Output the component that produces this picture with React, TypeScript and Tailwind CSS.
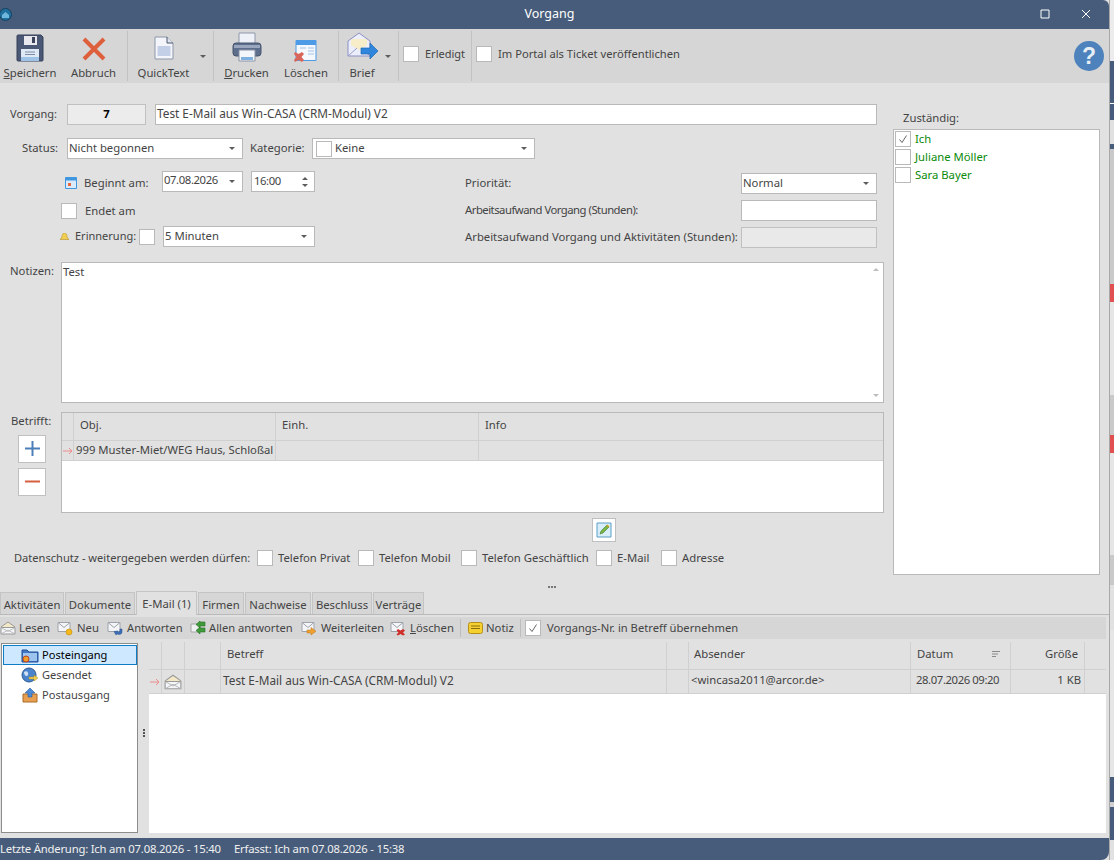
import React from "react";

const Caret = ({ className = "" }: { className?: string }) => (
  <svg width="6" height="3" viewBox="0 0 6 3" className={className}>
    <path d="M0 0h6L3 3z" fill="#5c5c5c" />
  </svg>
);

const Check = ({ checked = false, className = "" }: { checked?: boolean; className?: string }) => (
  <span className={`flex h-[16px] w-[16px] shrink-0 items-center justify-center border border-[#b9b9b9] bg-white ${className}`}>
    {checked && (
      <svg width="10" height="10" viewBox="0 0 10 10">
        <path d="M1.5 5.5 4 8.5 8.5 1.5" fill="none" stroke="#666" strokeWidth="1" />
      </svg>
    )}
  </span>
);

const Select = ({ value, className = "", box = false }: { value: string; className?: string; box?: boolean }) => (
  <div className={`flex h-[21px] items-center border border-[#b9b9b9] bg-white pl-[1px] pr-[7px] ${className}`}>
    {box && <Check className="ml-[2px] mr-[3px]" />}
    <span className="flex-1 truncate">{value}</span>
    <Caret />
  </div>
);

const Envelope = ({ open = false, size = 16 }: { open?: boolean; size?: number }) => (
  <svg width={size} height={size} viewBox="0 0 16 16" className="shrink-0">
    {open && <path d="M1 7 8 2l7 5" fill="#f3e9c6" stroke="#9a9a9a" strokeWidth="1" />}
    <path d="M1 7.5h14V14H1z" fill="#f4f6fa" stroke="#9a9a9a" strokeWidth="1" />
    <path d="M1 14l7-4 7 4M1 7.5l7 4 7-4" fill="none" stroke="#b0b0b0" strokeWidth="0.8" />
  </svg>
);

const MailIcon = ({ kind }: { kind: "neu" | "antw" | "allen" | "weiter" | "del" }) => (
  <svg width="17" height="16" viewBox="0 0 17 16" className="shrink-0">
    {kind === "allen" ? (
      <>
        <path d="M2 4h9v8H2z" fill="#eef0f2" stroke="#a5a5a5" />
        <path d="M16 2v4H11V8L7 4.5 11 1v1zM16 8v4H11v2L7 10.5 11 7v1z" fill="#3f9a3a" stroke="#2a6e28" strokeWidth="0.6" />
      </>
    ) : (
      <>
        <path d="M1 2.5h12v9H1z" fill="#f3f5f8" stroke="#9fa4aa" />
        <path d="M1 2.5l6 5 6-5" fill="none" stroke="#9fa4aa" />
        {kind === "neu" && <circle cx="12" cy="12" r="3" fill="#f2b81e" stroke="#c78c0c" strokeWidth="0.6" />}
        {kind === "antw" && <path d="M15 9v3c0 2-2 3-5 2l-1 1-2-3.5 4-.5-1 1c2 .6 3 0 3-3z" fill="#3c6db8" stroke="#28508c" strokeWidth="0.5" />}
        {kind === "weiter" && <path d="M6 10h4V7.5l5 3.8-5 3.7V13H6z" fill="#f0a030" stroke="#b87416" strokeWidth="0.5" />}
        {kind === "del" && <path d="M8 9l2.5 1.5L13 9l2 1.5-2 2 2 2-2 1-2.5-1.5L8 15.500l-1.500-1 2-2-2-2z" fill="#cf2f2a" />}
      </>
    )}
  </svg>
);

function Toolbar() {
  return (
    <div className="flex h-[54px] items-stretch bg-[#d6d6d6] pt-[2px] pb-[2px]">
      <div className="flex w-[60px] flex-col items-center">
        <svg width="28" height="28" viewBox="0 0 28 28" className="mt-[3px]">
          <path d="M1 2a1 1 0 0 1 1-1h23l2 2v23a1 1 0 0 1-1 1H2a1 1 0 0 1-1-1z" fill="#4a5875" stroke="#36415a" />
          <path d="M8 2h13v9H8z" fill="#e8e8ee" />
          <path d="M16 3h3v6h-3z" fill="#39445c" />
          <path d="M5 15h18v12H5z" fill="#dfe9f5" />
          <path d="M5 23h18v4H5z" fill="#9ec3e6" />
          <path d="M9 18h10M9 20.500h10" stroke="#7c8da6" />
        </svg>
        <span className="mt-auto leading-[16px]"><span className="underline">S</span>peichern</span>
      </div>
      <div className="flex w-[68px] flex-col items-center border-r border-[#c2c2c2]">
        <svg width="24" height="24" viewBox="0 0 24 24" className="mt-[6px]">
          <path d="M2 2l20 20M22 2 2 22" stroke="#dd5f3c" strokeWidth="4" />
        </svg>
        <span className="mt-auto leading-[16px]">Abbruch</span>
      </div>
      <div className="relative flex w-[86px] flex-col items-center border-r border-[#c2c2c2] pr-[14px]">
        <svg width="20" height="24" viewBox="0 0 20 24" className="mt-[5px]">
          <path d="M1 1h12l6 6v16H1z" fill="#f3f5fa" stroke="#8d97a8" />
          <path d="M13 1v6h6" fill="#dfe4ee" stroke="#4b5568" />
          <path d="M3.500 10h13v10h-13z" fill="#c3cfe6" />
        </svg>
        <span className="mt-auto leading-[16px]">QuickText</span>
        <Caret className="absolute right-[7px] top-[24px]" />
      </div>
      <div className="flex w-[65px] flex-col items-center">
        <svg width="30" height="30" viewBox="0 0 30 30" className="mt-[1px]">
          <path d="M7 1h16v11H7z" fill="#eef1f8" stroke="#8e97ab" />
          <rect x="1" y="11" width="28" height="13" rx="3" fill="#5d6d8c" stroke="#47566f" />
          <path d="M2 13h26v3H2z" fill="#9aa6bd" />
          <path d="M7 18h16v11H7z" fill="#f3f6fb" stroke="#8a93a8" />
          <path d="M9 25h12v3H9z" fill="#7eb1e0" />
        </svg>
        <span className="mt-auto leading-[16px]"><span className="underline">D</span>rucken</span>
      </div>
      <div className="flex w-[60px] flex-col items-center border-r border-[#c2c2c2] pr-[5px]">
        <svg width="24" height="24" viewBox="0 0 24 24" className="mt-[8px]">
          <path d="M2 1.500h20v20H2z" fill="#f4f8fd" stroke="#4d9be6" />
          <path d="M2 2h20v4H2z" fill="#4d9be6" />
          <path d="M14 9h6M14 12h6M6 9h6M14 15h6" stroke="#bcd4ee" strokeWidth="1.500" />
          <path d="M1 13l3.500 2L8 13l2 2-2.500 3 2.500 3-2 2-3.500-2L1 23l-1-2 2.500-3L0 15z" fill="#d9645a" />
        </svg>
        <span className="mt-auto leading-[16px]">Löschen</span>
      </div>
      <div className="relative flex w-[60px] flex-col items-center border-r border-[#c2c2c2] pr-[13px]">
        <svg width="32" height="30" viewBox="0 0 32 30">
          <path d="M2 10 13 2l11 8v15H2z" fill="#eceefb" stroke="#8d8fc4" />
          <path d="M5 8h16v6l-8 5-8-5z" fill="#f7edc9" />
          <path d="M2 25l9-8M24 25l-9-8" stroke="#9a9ccb" />
          <path d="M15 17h9v-5l8 8-8 8v-5h-9z" fill="#2f86dc" stroke="#2068b0" strokeWidth="0.7" />
        </svg>
        <span className="mt-auto leading-[16px]">Brief</span>
        <Caret className="absolute right-[7px] top-[24px]" />
      </div>
      <div className="flex w-[73px] items-center border-r border-[#c2c2c2] pb-[4px] pl-[4px]">
        <Check />
        <span className="ml-[6px] text-[11px]">Erledigt</span>
      </div>
      <div className="flex flex-1 items-center pb-[4px] pl-[4px]">
        <Check />
        <span className="ml-[6px] text-[11.2px]">Im Portal als Ticket veröffentlichen</span>
      </div>
      <svg width="30" height="30" viewBox="0 0 30 30" className="mr-[5px] mt-[10px]">
        <circle cx="15" cy="15" r="15" fill="#4d82bc" />
        <text x="15" y="23" textAnchor="middle" fontSize="23" fontWeight="700" fill="#e7eef6" fontFamily="Liberation Sans, sans-serif">?</text>
      </svg>
    </div>
  );
}

function FormLeft() {
  return (
    <div className="w-[893px] shrink-0">
      <div className="ml-[10px] flex h-[20px] items-center">
        <span className="w-[47px] text-[11px]">Vorgang:</span>
        <div className="ml-[10px] flex h-[21px] w-[79px] items-center justify-center border border-[#c0c0c0] bg-[#ececec] font-bold text-black">7</div>
        <div className="ml-[9px] flex h-[21px] w-[722px] items-center border border-[#b9b9b9] bg-white pl-[1px] text-[11.8px]">Test E-Mail aus Win-CASA (CRM-Modul) V2</div>
      </div>

      <div className="mt-[14px] ml-[22px] flex items-center">
        <span className="w-[45px]">Status:</span>
        <Select value="Nicht begonnen" className="w-[176px]" />
        <span className="ml-[7px] w-[62px]">Kategorie:</span>
        <Select value="Keine" box className="w-[223px]" />
      </div>

      <div className="mt-[12px] flex">
        <div className="w-[465px] shrink-0">
          <div className="flex h-[21px] items-center pl-[65px]">
            <svg width="12" height="12" viewBox="0 0 12 12" className="mr-[7px] mt-[3px] shrink-0">
              <path d="M.5.5h11v11H.5z" fill="#dbeafa" stroke="#3f97e0" />
              <path d="M1 1h10v2.500H1z" fill="#3f97e0" />
              <path d="M3 6h3v3H3z" fill="#e8663c" />
            </svg>
            <span className="w-[78px] pt-[3px]">Beginnt am:</span>
            <div className="flex h-[21px] w-[81px] items-center border border-[#b9b9b9] bg-white pl-[1px] pr-[7px]">
              <span className="flex-1 pb-[2px] tracking-[-0.4px]">07.08.2026</span>
              <Caret />
            </div>
            <div className="ml-[8px] flex h-[21px] w-[64px] items-center border border-[#b9b9b9] bg-white pl-[2px] pr-[6px]">
              <span className="flex-1 tracking-[-0.4px]">16:00</span>
              <span className="flex flex-col gap-[4px]">
                <Caret className="rotate-180" />
                <Caret />
              </span>
            </div>
          </div>
          <div className="mt-[11px] flex h-[16px] items-center pl-[61px]">
            <Check />
            <span className="ml-[8px]">Endet am</span>
          </div>
          <div className="mt-[7px] flex h-[21px] items-center pl-[60px]">
            <svg width="9" height="8" viewBox="0 0 9 8" className="mr-[6px] shrink-0">
              <path d="M4.500 0C6.500 0 7 2 7 4l2 2.500H0L2 4c0-2 .5-4 2.500-4z" fill="#f2cf52" stroke="#b5922a" strokeWidth="0.6" />
            </svg>
            <span className="w-[64px] text-[11px]">Erinnerung:</span>
            <Check />
            <Select value="5 Minuten" className="ml-[8px] w-[152px]" />
          </div>
        </div>
        <div className="w-[412px] shrink-0">
          <div className="mt-[2px] flex h-[21px] items-center justify-between">
            <span>Priorität:</span>
            <Select value="Normal" className="w-[136px]" />
          </div>
          <div className="mt-[6px] flex h-[21px] items-center justify-between">
            <span className="whitespace-nowrap tracking-[-0.5px]">Arbeitsaufwand Vorgang (Stunden):</span>
            <div className="h-[21px] w-[136px] border border-[#b9b9b9] bg-white" />
          </div>
          <div className="mt-[6px] flex h-[21px] items-center justify-between">
            <span className="whitespace-nowrap">Arbeitsaufwand Vorgang und Aktivitäten (Stunden):</span>
            <div className="h-[21px] w-[136px] shrink-0 border border-[#c0c0c0] bg-[#e9e9e9]" />
          </div>
        </div>
      </div>

      <div className="mt-[14px] flex">
        <span className="ml-[10px] w-[51px] pt-[1px]">Notizen:</span>
        <div className="flex h-[141px] w-[823px] border border-[#b9b9b9] bg-white">
          <span className="flex-1 pl-[1px] pt-[1px]">Test</span>
          <div className="flex w-[15px] flex-col items-center justify-between py-[5px]">
            <Caret className="rotate-180 opacity-40" />
            <Caret className="opacity-40" />
          </div>
        </div>
      </div>

      <div className="mt-[9px] flex">
        <div className="flex w-[61px] flex-col">
          <span className="ml-[11px] pt-[1px]">Betrifft:</span>
          <div className="ml-[18px] mt-[5px] flex h-[28px] w-[28px] items-center justify-center border border-[#c0c0c0] bg-white">
            <svg width="15" height="15" viewBox="0 0 15 15"><path d="M7.500 0v15M0 7.500h15" stroke="#4a7fb8" strokeWidth="2" /></svg>
          </div>
          <div className="ml-[18px] mt-[5px] flex h-[28px] w-[28px] items-center justify-center border border-[#c0c0c0] bg-white">
            <svg width="15" height="15" viewBox="0 0 15 15"><path d="M0 7.500h15" stroke="#d65f3f" strokeWidth="2" /></svg>
          </div>
        </div>
        <div className="h-[101px] w-[823px] border border-[#b9b9b9] bg-white">
          <div className="grid h-[28px] grid-cols-[12px_202px_203px_1fr] border-b border-[#d0d0d0] bg-[#e1e1e1] pb-[2px]">
            <div className="-mb-[2px] border-r border-[#d0d0d0]" />
            <div className="-mb-[2px] flex items-center border-r border-[#d0d0d0] pb-[2px] pl-[6px]">Obj.</div>
            <div className="-mb-[2px] flex items-center border-r border-[#d0d0d0] pb-[2px] pl-[6px]">Einh.</div>
            <div className="flex items-center pl-[6px]">Info</div>
          </div>
          <div className="grid h-[20px] grid-cols-[12px_202px_203px_1fr] border-b border-[#d0d0d0] bg-[#e1e1e1]">
            <div className="flex items-center border-r border-[#d0d0d0] pl-[1px]">
              <svg width="10" height="8" viewBox="0 0 10 8"><path d="M0 4h9M6 1l3 3-3 3" fill="none" stroke="#ee8a8a" /></svg>
            </div>
            <div className="flex items-center whitespace-nowrap border-r border-[#d0d0d0] pl-[2px]">999 Muster-Miet/WEG Haus, Schloßal</div>
            <div className="border-r border-[#d0d0d0]" />
            <div />
          </div>
        </div>
      </div>

      <div className="mt-[5px] flex justify-center pl-[315px]">
        <div className="flex h-[24px] w-[24px] items-center justify-center border border-[#c0c0c0] bg-white">
          <svg width="16" height="16" viewBox="0 0 16 16">
            <path d="M1 1h14v14H1z" fill="#d8eefa" stroke="#5a9ec4" />
            <path d="M4 12l1-3 6-6 2 2-6 6z" fill="#7ab648" stroke="#3f7a2a" strokeWidth="0.6" />
            <path d="M11 3l2 2" stroke="#d2a020" strokeWidth="1.500" />
          </svg>
        </div>
      </div>

      <div className="mt-[7px] ml-[14px] flex h-[18px] items-center text-[11.3px]">
        <span className="w-[243px] whitespace-nowrap text-[11.1px]">Datenschutz - weitergegeben werden dürfen:</span>
        <Check />
        <span className="ml-[5px] w-[80px]">Telefon Privat</span>
        <Check />
        <span className="ml-[5px] w-[82px]">Telefon Mobil</span>
        <Check />
        <span className="ml-[5px] w-[114px]">Telefon Geschäftlich</span>
        <Check />
        <span className="ml-[5px] w-[44px]">E-Mail</span>
        <Check />
        <span className="ml-[5px]">Adresse</span>
      </div>
    </div>
  );
}

function FormRight() {
  return (
    <div className="flex w-[207px] flex-col pt-[6px]">
      <span className="ml-[10px] leading-[16px]">Zuständig:</span>
      <div className="mt-[3px] h-[446px] border border-[#b9b9b9] bg-white pl-[1px] text-[#0a8a0a]">
        {["Ich", "Juliane Möller", "Sara Bayer"].map((n, i) => (
          <div key={n} className="flex h-[18px] items-center">
            <Check checked={i === 0} />
            <span className="ml-[4px]">{n}</span>
          </div>
        ))}
      </div>
    </div>
  );
}

const tabs = [
  { t: "Aktivitäten", w: "w-[64px]" },
  { t: "Dokumente", w: "w-[70px]" },
  { t: "E-Mail (1)", w: "w-[61px]", active: true },
  { t: "Firmen", w: "w-[46px]" },
  { t: "Nachweise", w: "w-[66px]" },
  { t: "Beschluss", w: "w-[60px]" },
  { t: "Verträge", w: "w-[51px]" },
];

function EmailToolbar() {
  return (
    <div className="mt-[2px] flex h-[22px] w-[1106px] shrink-0 items-center bg-[#d6d6d6]">
      <div className="flex w-[57px] items-center gap-[3px]"><Envelope open /><span>Lesen</span></div>
      <div className="flex w-[50px] items-center gap-[3px]"><MailIcon kind="neu" /><span>Neu</span></div>
      <div className="flex w-[82px] items-center gap-[3px]"><MailIcon kind="antw" /><span className="text-[11.2px]">Antworten</span></div>
      <div className="flex w-[112px] items-center gap-[3px]"><MailIcon kind="allen" /><span className="text-[11.2px]">Allen antworten</span></div>
      <div className="flex w-[89px] items-center gap-[3px]"><MailIcon kind="weiter" /><span className="text-[11.1px]">Weiterleiten</span></div>
      <div className="flex w-[70px] items-center gap-[3px]"><MailIcon kind="del" /><span><span className="underline">L</span>öschen</span></div>
      <div className="h-[18px] border-l border-[#bdbdbd]" />
      <div className="ml-[7px] flex w-[52px] items-center gap-[3px]">
        <svg width="15" height="12" viewBox="0 0 15 12" className="shrink-0">
          <rect x="0.500" y="0.500" width="14" height="11" rx="2" fill="#f5d02e" stroke="#b3901a" />
          <path d="M3 4h9M3 6.500h9" stroke="#8a6f10" />
        </svg>
        <span>Notiz</span>
      </div>
      <div className="h-[18px] border-l border-[#bdbdbd]" />
      <Check checked className="ml-[4px]" />
      <span className="ml-[6px] text-[11.2px]">Vorgangs-Nr. in Betreff übernehmen</span>
    </div>
  );
}

function EmailPanel() {
  const cols = "grid-cols-[12px_23px_36px_446px_22px_222px_100px_74px_22px]";
  const cell = "flex items-center border-l border-[#d0d0d0]";
  return (
    <div className="flex h-[199px] shrink-0 pt-[3px]">
      <div className="ml-[1px] mt-[1px] h-[190px] w-[137px] border border-[#8c8c8c] bg-white pt-[1px] text-[11.1px]">
        <div className="ml-[1px] flex h-[20px] w-[134px] items-center border border-[#0f7cc8] bg-[#cde8ff] pl-[17px] text-black">
          <svg width="18" height="16" viewBox="0 0 18 16" className="mr-[3px] shrink-0">
            <path d="M1 3h5l2 2h9v10H1z" fill="#3f76c8" stroke="#254f90" />
            <path d="M2 6h14v8H2z" fill="#9cc4ee" />
            <circle cx="5" cy="12" r="3" fill="#f0a02a" stroke="#c0431e" />
          </svg>
          Posteingang
        </div>
        <div className="flex h-[20px] items-center pl-[19px]">
          <svg width="18" height="16" viewBox="0 0 18 16" className="mr-[3px] shrink-0">
            <circle cx="8" cy="8" r="7" fill="#4a84cc" stroke="#2d5a96" />
            <path d="M3 5c3-2 5 1 4 3S3 9 3 5z" fill="#cfe0f2" />
            <path d="M8 10h5V8l4 3-4 3v-2H8z" fill="#f2d050" stroke="#a98a1e" strokeWidth="0.5" />
          </svg>
          Gesendet
        </div>
        <div className="flex h-[20px] items-center pl-[19px]">
          <svg width="18" height="16" viewBox="0 0 18 16" className="mr-[3px] shrink-0">
            <path d="M2 7h14v8H2z" fill="#e8a050" stroke="#a86a28" />
            <path d="M9 1l5 5h-3v4H7V6H4z" fill="#4a8ad6" stroke="#2a5a9a" strokeWidth="0.6" />
          </svg>
          Postausgang
        </div>
      </div>
      <div className="flex w-[11px] flex-col items-center justify-center gap-[1px] pb-[14px]">
        <span className="h-[2px] w-[2px] bg-[#555]" />
        <span className="h-[2px] w-[2px] bg-[#555]" />
        <span className="h-[2px] w-[2px] bg-[#555]" />
      </div>
      <div className="w-[957px]">
        <div className={`grid h-[28px] ${cols} border-b border-[#d0d0d0]`}>
          <div />
          <div className={cell} />
          <div className={cell} />
          <div className={`${cell} pb-[2px] pl-[6px]`}>Betreff</div>
          <div className={cell} />
          <div className={`${cell} pb-[2px] pl-[5px]`}>Absender</div>
          <div className={`${cell} justify-between pb-[2px] pl-[6px] pr-[10px]`}>
            <span>Datum</span>
            <svg width="8" height="7" viewBox="0 0 8 7"><path d="M0 .5h8M0 3h6M0 5.500h4" stroke="#8a8a8a" /></svg>
          </div>
          <div className={`${cell} justify-end pb-[2px] pr-[6px]`}>Größe</div>
          <div className={cell} />
        </div>
        <div className={`grid h-[24px] ${cols} border-b border-[#d0d0d0]`}>
          <div className="flex items-center pl-[1px]">
            <svg width="10" height="8" viewBox="0 0 10 8"><path d="M0 4h9M6 1l3 3-3 3" fill="none" stroke="#ee8a8a" /></svg>
          </div>
          <div className={`${cell} pl-[2px]`}><Envelope open size={18} /></div>
          <div className={cell} />
          <div className={`${cell} pb-[2px] pl-[2px] text-[11.8px]`}>Test E-Mail aus Win-CASA (CRM-Modul) V2</div>
          <div className={cell} />
          <div className={`${cell} pb-[2px] pl-[2px]`}>&lt;wincasa2011@arcor.de&gt;</div>
          <div className={`${cell} pb-[2px] pl-[5px] tracking-[-0.4px]`}>28.07.2026 09:20</div>
          <div className={`${cell} justify-end pb-[2px] pr-[3px]`}>1 KB</div>
          <div className={cell} />
        </div>
        <div className="h-[139px] bg-white" />
      </div>
    </div>
  );
}

function BackStrip() {
  return (
    <div className="flex h-[860px] w-[4px] flex-col bg-[#e1e1e1]">
      <div className="h-[61px] bg-[#ececec]" />
      <div className="h-[42px] bg-[#475c7a]" />
      <div className="h-[1px] bg-white" />
      <div className="h-[16px] bg-[#475c7a]" />
      <div className="h-[24px] bg-[#e1e1e1]" />
      <div className="h-[5px] bg-[#475c7a]" />
      <div className="h-[135px] bg-[#c9c9c9]" />
      <div className="h-[18px] bg-[#e05050]" />
      <div className="h-[93px] bg-[#e6e6e6]" />
      <div className="h-[40px] bg-[#c9c9c9]" />
      <div className="h-[18px] bg-[#e05050]" />
      <div className="h-[102px] bg-[#e6e6e6]" />
      <div className="h-[30px] bg-[#c9c9c9]" />
      <div className="h-[45px] bg-[#e1e1e1]" />
      <div className="h-[147px] bg-[#e6e6e6]" />
      <div className="h-[25px] bg-[#475c7a]" />
      <div className="h-[5px] bg-[#cfcfcf]" />
      <div className="h-[33px] bg-[#475c7a]" />
    </div>
  );
}

export default function App() {
  return (
    <div className="flex h-[860px] w-[1114px] overflow-hidden bg-white font-['Noto_Sans',sans-serif] text-[11.3px] text-[#444]">
      <div className="flex h-[860px] w-[1110px] shrink-0 flex-col border-r border-[#a8a8a8] bg-[#e1e1e1]">
        <div className="relative flex h-[29px] shrink-0 items-center justify-center rounded-tr-[6px] bg-[#475c7a] pr-[10px] text-[12.5px] text-white">
          <svg width="13" height="13" viewBox="0 0 13 13" className="absolute -left-[1px] top-[8px]">
            <circle cx="6.500" cy="6.500" r="6" fill="#1f6f9e" stroke="#14425e" />
            <path d="M3 7l3.500-3L10 7v3H3z" fill="#6fb6dc" />
          </svg>
          <span>Vorgang</span>
          <svg width="10" height="10" viewBox="0 0 10 10" className="absolute right-[59px] top-[9px]">
            <path d="M1 1h8v8H1z" fill="none" stroke="#fff" />
          </svg>
          <svg width="10" height="10" viewBox="0 0 10 10" className="absolute right-[18px] top-[9px]">
            <path d="M1 1l8 8M9 1 1 9" stroke="#fff" />
          </svg>
        </div>
        <Toolbar />
        <div className="flex h-[504px] shrink-0 pt-[21px]">
          <FormLeft />
          <FormRight />
        </div>
        <div className="-mt-[2px] flex h-[4px] shrink-0 items-center justify-center gap-[1px] pr-[6px]">
          <span className="h-[2px] w-[2px] bg-[#777]" />
          <span className="h-[2px] w-[2px] bg-[#777]" />
          <span className="h-[2px] w-[2px] bg-[#777]" />
        </div>
        <div className="flex h-[26px] shrink-0 items-end border-b border-[#b9b9b9]">
          {tabs.map((t) => (
            <div
              key={t.t}
              className={
                t.active
                  ? `-mb-[1px] mr-[1px] flex h-[24px] ${t.w} items-center justify-center border border-b-0 border-[#c4c4c4] bg-[#e1e1e1] pt-[1px]`
                  : `mr-[1px] flex h-[22px] ${t.w} items-center justify-center border border-b-0 border-[#c4c4c4] bg-[#d6d6d6] pt-[3px]`
              }
            >
              {t.t}
            </div>
          ))}
        </div>
        <EmailToolbar />
        <EmailPanel />
        <div className="flex h-[22px] shrink-0 items-center rounded-br-[8px] bg-[#475c7a] pt-[1px] tracking-[-0.2px] text-[#f0f0f0]">
          <span className="w-[234px] whitespace-nowrap">Letzte Änderung: Ich am 07.08.2026 - 15:40</span>
          <span className="whitespace-nowrap">Erfasst: Ich am 07.08.2026 - 15:38</span>
        </div>
      </div>
      <BackStrip />
    </div>
  );
}
